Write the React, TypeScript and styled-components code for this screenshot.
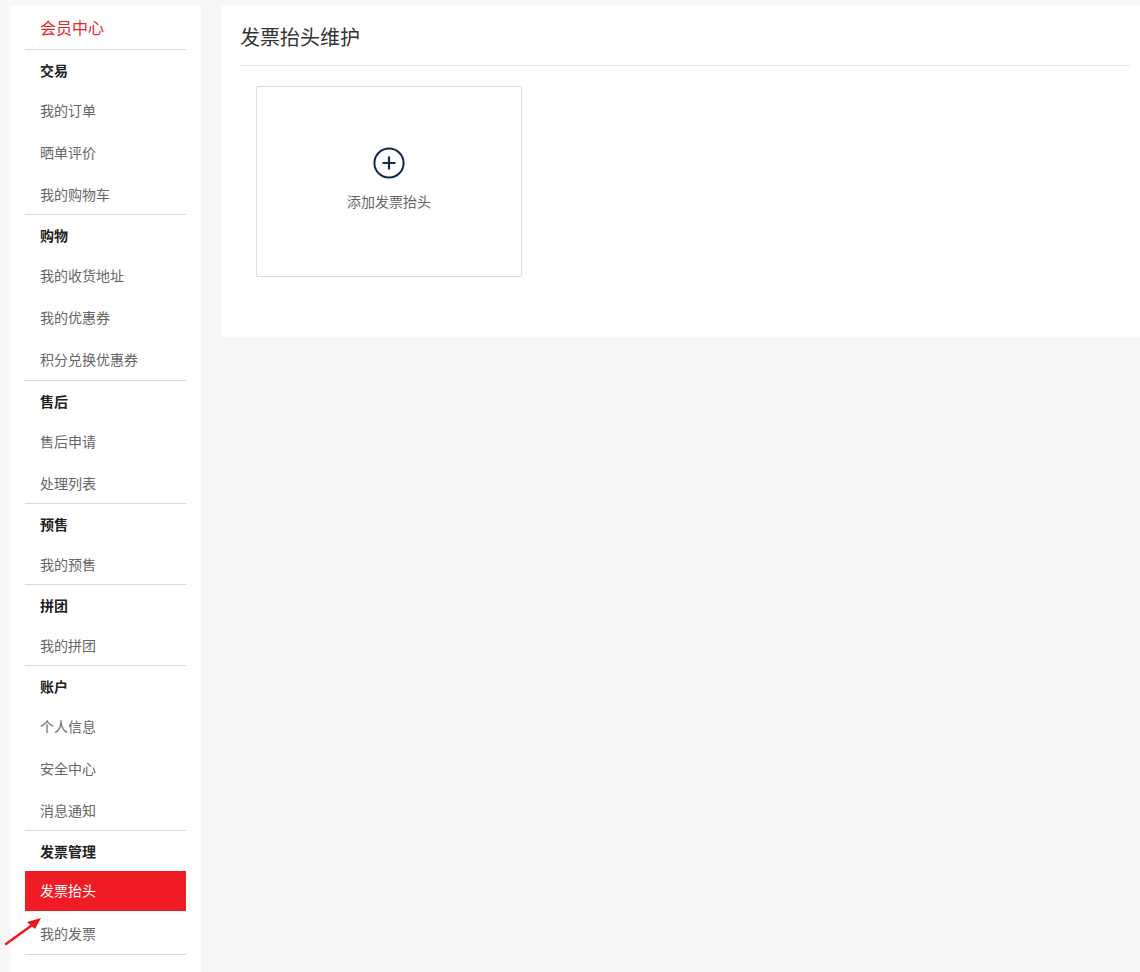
import styled, { createGlobalStyle } from 'styled-components'

const GlobalStyle = createGlobalStyle`
  html, body {
    margin: 0;
    padding: 0;
    background: #f7f7f7;
    font-family: "Liberation Sans", "Noto Sans CJK SC", sans-serif;
  }
`

const Page = styled.div`
  position: relative;
  display: flex;
  align-items: flex-start;
  gap: 20px;
  padding: 6px 0 0 10px;
  min-height: 972px;
  box-sizing: border-box;
  overflow: hidden;
`

const Sidebar = styled.aside`
  width: 191px;
  flex-shrink: 0;
  background: #fff;
  padding: 0 15px 40px;
  box-sizing: border-box;
  align-self: stretch;
`

const SideTitle = styled.div`
  height: 44px;
  box-sizing: border-box;
  padding: 2px 0 0 15px;
  line-height: 41px;
  font-size: 16px;
  color: #e4262c;
  border-bottom: 1px solid #d9d9d9;
`

const Group = styled.div<{ $extra?: number }>`
  border-bottom: 1px solid #d9d9d9;
  padding-bottom: ${(p) => p.$extra ?? 0}px;
`

const GroupHead = styled.div`
  height: 38px;
  box-sizing: border-box;
  padding: 4px 0 0 15px;
  line-height: 34px;
  font-size: 14px;
  font-weight: bold;
  color: #222;
`

const NavItem = styled.div<{ $active?: boolean }>`
  height: ${(p) => (p.$active ? '40px' : '42px')};
  box-sizing: border-box;
  margin-top: ${(p) => (p.$active ? '2px' : '0')};
  padding: ${(p) => (p.$active ? '0 0 0 15px' : '4px 0 0 15px')};
  line-height: ${(p) => (p.$active ? '40px' : '38px')};
  font-size: 14px;
  color: ${(p) => (p.$active ? '#fff' : '#666')};
  background: ${(p) => (p.$active ? '#ef1b25' : 'transparent')};
  cursor: pointer;
`

const Main = styled.main`
  flex: 1;
  background: #fff;
  padding: 0 10px 60px 19px;
`

const MainHeader = styled.h2`
  margin: 0;
  padding: 18px 0 13px;
  font-size: 20px;
  line-height: 28px;
  font-weight: normal;
  color: #333;
  border-bottom: 1px solid #e8e8e8;
`

const CardList = styled.div`
  display: flex;
  gap: 20px;
  padding: 20px 0 0 16px;
`

const AddCard = styled.div`
  width: 266px;
  height: 191px;
  box-sizing: border-box;
  border: 1px solid #dcdcdc;
  border-radius: 2px;
  display: flex;
  flex-direction: column;
  align-items: center;
  justify-content: center;
  gap: 13px;
  padding-bottom: 4px;
  cursor: pointer;
`

const AddText = styled.span`
  font-size: 14px;
  line-height: 20px;
  color: #666;
`

const Arrow = styled.svg`
  position: absolute;
  left: 4px;
  top: 914px;
`

const groups: { head: string; items: string[]; extra?: number }[] = [
  { head: '交易', items: ['我的订单', '晒单评价', '我的购物车'] },
  { head: '购物', items: ['我的收货地址', '我的优惠券', '积分兑换优惠券'], extra: 1 },
  { head: '售后', items: ['售后申请', '处理列表'] },
  { head: '预售', items: ['我的预售'] },
  { head: '拼团', items: ['我的拼团'] },
  { head: '账户', items: ['个人信息', '安全中心', '消息通知'] },
  { head: '发票管理', items: ['发票抬头', '我的发票'], extra: 1 },
]

function PlusCircle() {
  return (
    <svg width="32" height="32" viewBox="0 0 32 32">
      <circle cx="16" cy="16" r="14.6" fill="none" stroke="#10284a" strokeWidth="2" />
      <path d="M16 9.5v13M9.5 16h13" stroke="#10284a" strokeWidth="2.2" />
    </svg>
  )
}

export default function App() {
  return (
    <>
      <GlobalStyle />
      <Page>
        <Sidebar>
          <SideTitle>会员中心</SideTitle>
          {groups.map((g) => (
            <Group key={g.head} $extra={g.extra}>
              <GroupHead>{g.head}</GroupHead>
              {g.items.map((it) => (
                <NavItem key={it} $active={it === '发票抬头'}>
                  {it}
                </NavItem>
              ))}
            </Group>
          ))}
        </Sidebar>
        <Main>
          <MainHeader>发票抬头维护</MainHeader>
          <CardList>
            <AddCard>
              <PlusCircle />
              <AddText>添加发票抬头</AddText>
            </AddCard>
          </CardList>
        </Main>
        <Arrow width="40" height="34" viewBox="0 0 40 34">
          <path d="M2 30L31 9" stroke="#f0141e" strokeWidth="2.4" strokeLinecap="round" />
          <path d="M37 4L23 8L31 15Z" fill="#f0141e" />
        </Arrow>
      </Page>
    </>
  )
}
